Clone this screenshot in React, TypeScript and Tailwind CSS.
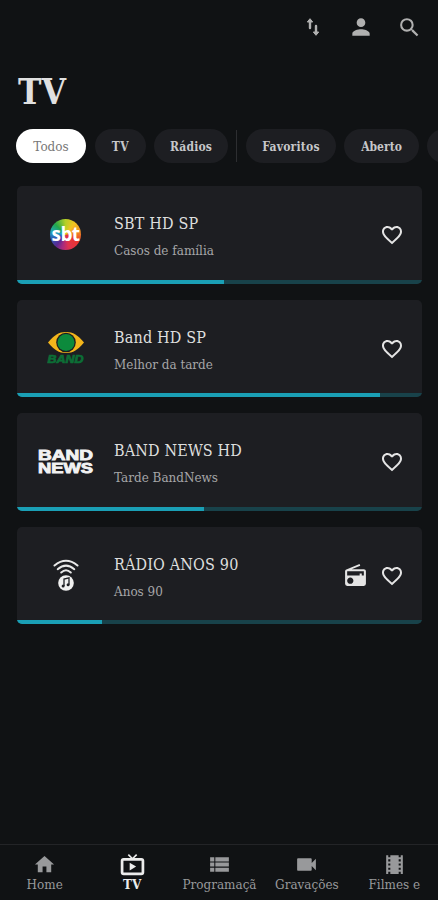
import type { ReactNode } from "react";
import {
  MdFavoriteBorder,
  MdHome,
  MdLiveTv,
  MdPerson,
  MdRadio,
  MdSearch,
  MdTheaters,
  MdVideocam,
  MdViewList,
} from "react-icons/md";

function SortArrows() {
  return (
    <svg width="24" height="24" viewBox="0 0 24 24" fill="currentColor" stroke="currentColor" strokeLinejoin="round">
      <path d="M9 13V6M15 11v7" fill="none" strokeWidth="2.400" strokeLinecap="round" />
      <path d="M9 3.700L6.300 7h5.400zM15 20.300L12.300 17h5.400z" strokeWidth="1" />
    </svg>
  );
}

function SbtLogo() {
  return (
    <div className="flex size-[31px] items-center justify-center rounded-full bg-[conic-gradient(from_0deg,#b5cf26,#f4c321_40deg,#f08a25_80deg,#e8352f_120deg,#e0324f_165deg,#a52a80_195deg,#5a2a91_220deg,#2f55b5_250deg,#21a3c0_280deg,#22a84b_315deg,#b5cf26)]">
      <span className="pb-px font-['Open_Sans',sans-serif] text-[19px] leading-none font-bold tracking-[-0.6px] text-white font-stretch-normal">
        sbt
      </span>
    </div>
  );
}

function BandLogo() {
  return (
    <svg width="38" height="34" viewBox="0 0 38 34">
      <path d="M1 11.5C7 4 12 1 19 1s12 3 18 10.500C31 19 26 22 19 22S7 19 1 11.500z" fill="#f3b51b" />
      <circle cx="19" cy="11.500" r="9.800" fill="#1d1e22" />
      <circle cx="19" cy="11.500" r="8.500" fill="#0c8a3c" />
      <text x="0.500" y="31.500" textLength="36" lengthAdjust="spacingAndGlyphs" fontFamily="Liberation Sans, sans-serif" fontWeight="700" fontStyle="italic" fontSize="10.500" fill="#0c6e36" stroke="#0c6e36" strokeWidth="0.700">
        BAND
      </text>
    </svg>
  );
}

function BandNewsLogo() {
  return (
    <svg className="overflow-visible" width="56" height="26" viewBox="0 0 56 26" fontFamily="Liberation Sans, sans-serif" fontWeight="700" fontSize="15" fill="#f2f2f2" stroke="#f2f2f2" strokeWidth="0.900">
      <text x="0" y="11" textLength="55" lengthAdjust="spacingAndGlyphs">BAND</text>
      <text x="0" y="24" textLength="55" lengthAdjust="spacingAndGlyphs">NEWS</text>
    </svg>
  );
}

function RadioLogo() {
  return (
    <svg width="26" height="32" viewBox="0 0 26 32" fill="none">
      <g stroke="#e8e8e8" strokeWidth="2" strokeLinecap="round">
        <path d="M1.500 6.500Q13-3 24.500 6.500" />
        <path d="M4.700 10.200Q13 3 21.300 10.200" />
        <path d="M8.200 13.500Q13 9 17.800 13.500" />
      </g>
      <circle cx="13" cy="24" r="7.800" fill="#f0f0f0" />
      <path d="M11 27v-7l5-1.200v7" stroke="#1d1e22" strokeWidth="1.300" />
      <circle cx="10.100" cy="27" r="1.500" fill="#1d1e22" />
      <circle cx="15.100" cy="25.800" r="1.500" fill="#1d1e22" />
    </svg>
  );
}

function TvIcon() {
  return (
    <svg width="25" height="25" viewBox="0 0 24 24" fill="none" stroke="currentColor" strokeLinejoin="round">
      <rect x="2" y="7" width="20" height="14" rx="1.500" strokeWidth="2.600" />
      <path d="M8 2.500l4 4 4-4" strokeWidth="1.600" />
      <path d="M9.300 10.300v7.400l6.200-3.700z" fill="currentColor" stroke="none" />
    </svg>
  );
}

type Channel = {
  name: string;
  show: string;
  logo: ReactNode;
  progress: number;
  radio?: boolean;
};

const channels: Channel[] = [
  { name: "SBT HD SP", show: "Casos de família", logo: <SbtLogo />, progress: 51 },
  { name: "Band HD SP", show: "Melhor da tarde", logo: <BandLogo />, progress: 89.6 },
  { name: "BAND NEWS HD", show: "Tarde BandNews", logo: <BandNewsLogo />, progress: 46.1 },
  { name: "RÁDIO ANOS 90", show: "Anos 90", logo: <RadioLogo />, progress: 21.1, radio: true },
];

function ChannelCard({ channel }: { channel: Channel }) {
  return (
    <article className="flex h-[97.500px] flex-col overflow-hidden rounded-[5px] bg-[#1d1e22]">
      <div className="flex flex-1 items-center pr-[18px]">
        <div className="flex w-[97px] shrink-0 items-center justify-center pt-1">{channel.logo}</div>
        <div className="flex-1 pt-[7px] whitespace-nowrap">
          <h2 className="text-[16px] leading-[22px] tracking-[0.16px] text-[#dedede]">{channel.name}</h2>
          <p className="mt-2 font-['DejaVu_Serif',serif] text-[12px] leading-4 text-[#a6a6a8] font-stretch-normal">{channel.show}</p>
        </div>
        <div className="flex items-center gap-3 pt-[5px] text-[#e4e4e4]">
          {channel.radio && <MdRadio size={25} />}
          <MdFavoriteBorder size={24} />
        </div>
      </div>
      <div className="h-1 bg-[#18424a]">
        <div className="h-full bg-[#1a9fb5]" style={{ width: `${channel.progress}%` }} />
      </div>
    </article>
  );
}

const chip = "flex h-[34px] shrink-0 items-center justify-center rounded-full pt-px text-[12px] whitespace-nowrap";

export default function App() {
  return (
    <div className="flex h-[900px] w-[438px] flex-col overflow-hidden bg-[#101214] font-['DejaVu_Serif_Condensed','DejaVu_Serif',serif] font-stretch-condensed">
      <header className="flex h-[54px] shrink-0 items-center justify-end gap-[23px] pr-4 text-[#b0b0b0]">
        <SortArrows />
        <MdPerson size={26} />
        <MdSearch size={25} />
      </header>
      <h1 className="mt-4 ml-[18px] text-[35px] leading-[44px] font-bold text-[#e0e0e0]">TV</h1>
      <div className="mt-[15px] ml-4 flex items-center overflow-hidden font-bold text-[#c6c7c9]">
        <div className={`${chip} w-[70px] bg-white font-['DejaVu_Serif',serif] font-normal text-[#777] font-stretch-normal`}>Todos</div>
        <div className={`${chip} ml-[9px] w-[51px] bg-[#1d1e22] tracking-[0.5px]`}>TV</div>
        <div className={`${chip} ml-2 w-[74px] bg-[#1d1e22] tracking-[0.15px]`}>Rádios</div>
        <div className="ml-2 h-8 w-px shrink-0 bg-[#2d2e31]" />
        <div className={`${chip} ml-[9px] w-[90px] bg-[#1d1e22] tracking-[0.2px]`}>Favoritos</div>
        <div className={`${chip} ml-2 w-[75px] bg-[#1d1e22]`}>Aberto</div>
        <div className={`${chip} ml-2 w-[75px] bg-[#1d1e22]`} />
      </div>
      <main className="mt-[23px] flex flex-1 flex-col gap-4 pr-4 pl-[17px]">
        {channels.map((c) => (
          <ChannelCard key={c.name} channel={c} />
        ))}
      </main>
      <nav className="grid h-[56px] shrink-0 grid-cols-5 border-t border-[#232427] pl-px font-['DejaVu_Serif',serif] text-[12px] leading-4 text-[#98999b] font-stretch-normal">
        {[
          { label: "Home", icon: <MdHome size={23} /> },
          { label: "TV", icon: <TvIcon />, active: true },
          { label: "Programaçã", icon: <MdViewList size={25} /> },
          { label: "Gravações", icon: <MdVideocam size={25} /> },
          { label: "Filmes e", icon: <MdTheaters size={25} /> },
        ].map((tab) => (
          <div key={tab.label} className={tab.active ? "flex flex-col items-center pt-1.5 font-bold text-[#ececec]" : "flex flex-col items-center pt-1.5"}>
            <div className="flex h-[26px] items-center">{tab.icon}</div>
            <span className="whitespace-nowrap">{tab.label}</span>
          </div>
        ))}
      </nav>
    </div>
  );
}
